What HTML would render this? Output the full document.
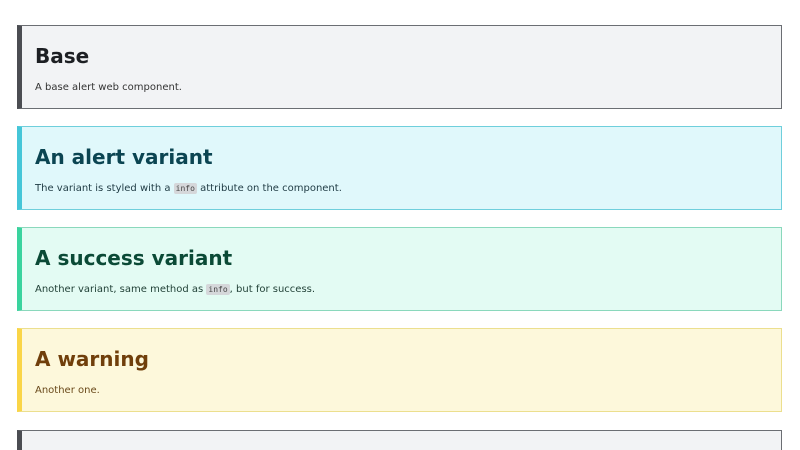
<html><head><style>
html,body{margin:0;background:#fff;font-family:"DejaVu Sans","Liberation Sans",sans-serif;overflow:hidden;height:450px}
.a{position:absolute;left:17px;width:759px;height:82px;border:1px solid;border-left:5px solid;box-sizing:content-box}
.a h1{position:absolute;left:13px;top:17px;margin:0;font-size:20px;font-weight:bold;line-height:26px}
.a p{position:absolute;left:13px;top:55px;margin:0;font-size:10px;line-height:14px}
code{font-family:"DejaVu Sans Mono",monospace;font-size:8px;background:#d5d7da;padding:1px 2px;border-radius:2px;color:#444}
</style></head><body>
<div class="a" style="top:25px;background:#f2f3f5;border-color:#6b6e73;border-left-color:#4b4d52"><h1 style="color:#1d1f23">Base</h1><p style="color:#333">A base alert web component.</p></div>
<div class="a" style="top:126px;background:#e0f8fb;border-color:#6fcfdc;border-left-color:#45c6d8"><h1 style="color:#0b4552">An alert variant</h1><p style="color:#1f3b44">The variant is styled with a <code>info</code> attribute on the component.</p></div>
<div class="a" style="top:227px;background:#e3fbf3;border-color:#8ad8bc;border-left-color:#3ad39e"><h1 style="color:#0b4a36">A success variant</h1><p style="color:#1f3f35">Another variant, same method as <code>info</code>, but for success.</p></div>
<div class="a" style="top:328px;background:#fdf8db;border-color:#ecdf8e;border-left-color:#fad547"><h1 style="color:#703f0b">A warning</h1><p style="color:#6a4a1b">Another one.</p></div>
<div class="a" style="top:430px;height:20px;border-bottom:none;background:#f2f3f5;border-color:#6b6e73;border-left-color:#4b4d52"></div>
</body></html>
